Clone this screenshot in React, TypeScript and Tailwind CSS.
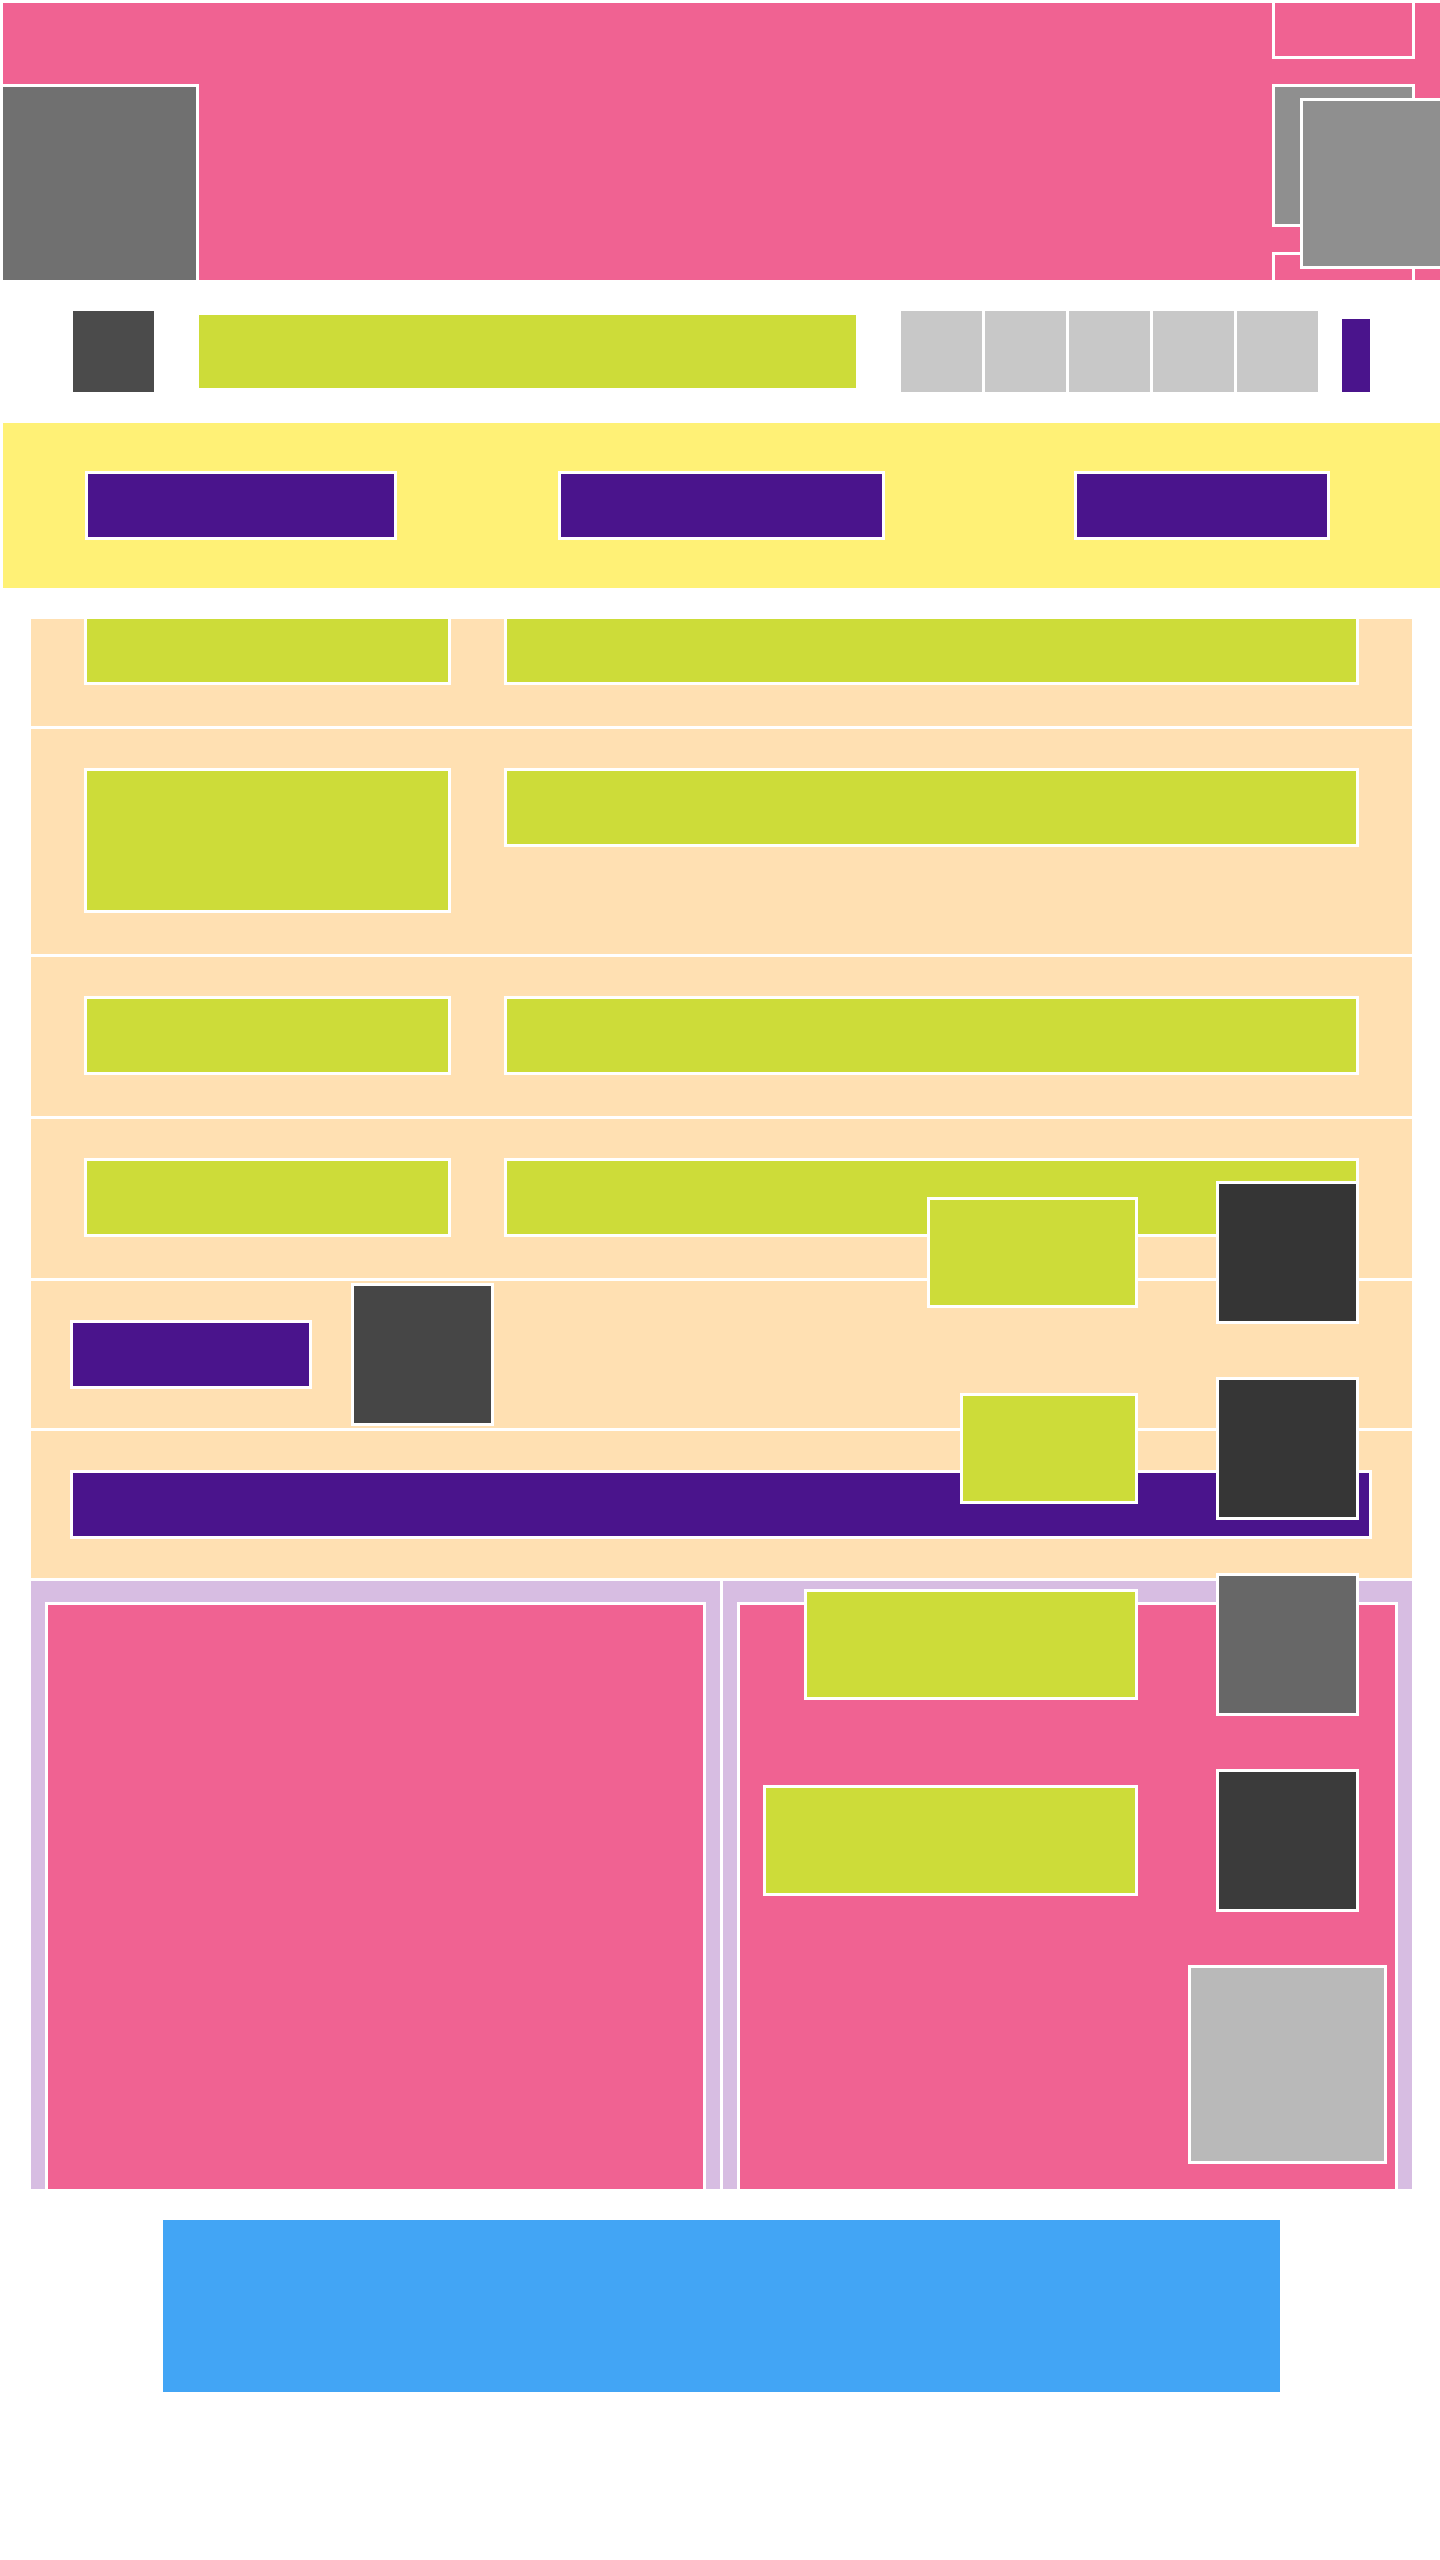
import React from "react";

const B = "border-[3px] border-white";

function PeachRow({ h, children, className = "" }: { h: string; children?: React.ReactNode; className?: string }) {
  return <div className={`bg-[#ffe0b2] ${h} ${className}`}>{children}</div>;
}

export default function App() {
  return (
    <div className="w-[1440px] min-h-[2560px] bg-white font-['Liberation_Sans',sans-serif]">
      {/* Header */}
      <div className="relative ml-[3px] mt-[3px] h-[277px] overflow-hidden bg-[#f06292]">
        <div className={`absolute left-[-3px] top-[81px] h-[202px] w-[199px] bg-[#707070] ${B}`} />
        <div className="absolute left-[1269px] top-[-87px] flex flex-col gap-[25px]">
          <div className={`h-[143px] w-[143px] bg-[#f06292] ${B}`} />
          <div className={`h-[143px] w-[143px] bg-[#8f8f8f] ${B}`} />
          <div className={`h-[143px] w-[143px] bg-[#f06292] ${B}`} />
        </div>
        <div className={`absolute left-[1297px] top-[95px] h-[171px] w-[143px] bg-[#8f8f8f] ${B}`} />
      </div>

      {/* Nav */}
      <div className="flex h-[143px] items-center pl-[73px]">
        <div className="h-[81px] w-[81px] bg-[#4b4b4b]" />
        <div className="ml-[45px] h-[73px] w-[657px] bg-[#cddc39]" />
        <div className="ml-[45px] flex gap-[3px]">
          {[0, 1, 2, 3, 4].map((i) => (
            <div key={i} className="h-[81px] w-[81px] bg-[#c8c8c8]" />
          ))}
        </div>
        <div className="ml-[24px] mt-[8px] h-[73px] w-[28px] bg-[#4a148c]" />
      </div>

      {/* Yellow band */}
      <div className="ml-[3px] flex h-[165px] items-center bg-[#fff176] pl-[82px]">
        <div className={`h-[69px] w-[312px] bg-[#4a148c] ${B}`} />
        <div className={`ml-[161px] h-[69px] w-[327px] bg-[#4a148c] ${B}`} />
        <div className={`ml-[189px] h-[69px] w-[256px] bg-[#4a148c] ${B}`} />
      </div>

      {/* Main content */}
      <div className="relative ml-[31px] mt-[31px] w-[1381px]">
        <div className="flex flex-col gap-[3px] bg-white">
          <PeachRow h="h-[107px]" className="grid grid-cols-[367px_855px] gap-[53px] px-[53px]">
            <div className="h-[66px] border-[3px] border-t-0 border-white bg-[#cddc39]" />
            <div className="h-[66px] border-[3px] border-t-0 border-white bg-[#cddc39]" />
          </PeachRow>
          <PeachRow h="h-[225px]" className="grid grid-cols-[367px_855px] items-start gap-[53px] px-[53px] pt-[39px]">
            <div className={`h-[145px] bg-[#cddc39] ${B}`} />
            <div className={`h-[79px] bg-[#cddc39] ${B}`} />
          </PeachRow>
          <PeachRow h="h-[159px]" className="grid grid-cols-[367px_855px] items-start gap-[53px] px-[53px] pt-[39px]">
            <div className={`h-[79px] bg-[#cddc39] ${B}`} />
            <div className={`h-[79px] bg-[#cddc39] ${B}`} />
          </PeachRow>
          <PeachRow h="h-[159px]" className="grid grid-cols-[367px_855px] items-start gap-[53px] px-[53px] pt-[39px]">
            <div className={`h-[79px] bg-[#cddc39] ${B}`} />
            <div className={`h-[79px] bg-[#cddc39] ${B}`} />
          </PeachRow>
          <PeachRow h="h-[147px]" className="flex items-center gap-[39px] pl-[39px]">
            <div className={`h-[69px] w-[242px] bg-[#4a148c] ${B}`} />
            <div className={`h-[143px] w-[143px] bg-[#464646] ${B}`} />
          </PeachRow>
          <PeachRow h="h-[147px]" className="flex items-center pl-[39px]">
            <div className={`h-[69px] w-[1302px] bg-[#4a148c] ${B}`} />
          </PeachRow>
          <div className="grid h-[608px] grid-cols-2 gap-[3px] bg-white">
            <div className="overflow-hidden bg-[#d7bde2] px-[14px] pt-[21px]">
              <div className={`h-[620px] bg-[#f06292] ${B}`} />
            </div>
            <div className="overflow-hidden bg-[#d7bde2] px-[14px] pt-[21px]">
              <div className={`h-[620px] bg-[#f06292] ${B}`} />
            </div>
          </div>
        </div>

        {/* Floating column over content */}
        <div className="absolute right-[25px] top-[562px] flex flex-col items-end gap-[53px]">
          <div className="flex items-center gap-[50px]">
            <div className={`h-[111px] w-[211px] bg-[#cddc39] ${B}`} />
            <div className="flex w-[199px] justify-center">
              <div className={`h-[143px] w-[143px] bg-[#353535] ${B}`} />
            </div>
          </div>
          <div className="flex items-center gap-[50px]">
            <div className={`h-[111px] w-[178px] bg-[#cddc39] ${B}`} />
            <div className="flex w-[199px] justify-center">
              <div className={`h-[143px] w-[143px] bg-[#363636] ${B}`} />
            </div>
          </div>
          <div className="flex items-center gap-[50px]">
            <div className={`h-[111px] w-[334px] bg-[#cddc39] ${B}`} />
            <div className="flex w-[199px] justify-center">
              <div className={`h-[143px] w-[143px] bg-[#676767] ${B}`} />
            </div>
          </div>
          <div className="flex items-center gap-[50px]">
            <div className={`h-[111px] w-[375px] bg-[#cddc39] ${B}`} />
            <div className="flex w-[199px] justify-center">
              <div className={`h-[143px] w-[143px] bg-[#3b3b3b] ${B}`} />
            </div>
          </div>
          <div className={`h-[199px] w-[199px] bg-[#b9b9b9] ${B}`} />
        </div>
      </div>

      {/* Footer blue */}
      <div className="mt-[31px] ml-[163px] h-[172px] w-[1117px] bg-[#42a5f5]" />
    </div>
  );
}
